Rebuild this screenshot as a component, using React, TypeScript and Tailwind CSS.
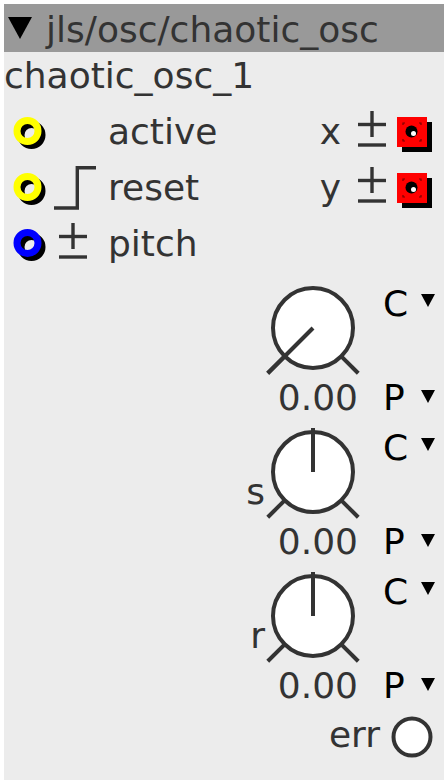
import type { ReactNode } from "react";

const font = { fontFamily: '"DejaVu Sans", "Liberation Sans", sans-serif' };

function Inlet({ color }: { color: string }) {
  return (
    <svg width="50" height="56" className="shrink-0">
      <circle cx="27.5" cy="32" r="10.5" fill="none" stroke="#000" strokeWidth="7" />
      <circle cx="23.5" cy="28" r="10.5" fill="none" stroke={color} strokeWidth="7" />
    </svg>
  );
}

function Outlet() {
  return (
    <svg width="38" height="56" className="ml-[8px] shrink-0">
      <rect x="7" y="19" width="30" height="30" fill="#000" />
      <rect x="2" y="14" width="30" height="30" fill="#ff0000" />
      <path
        d="M8 22v-2h2M24 20h2v2M26 36v2h-2M10 38H8v-2"
        stroke="#7a0000"
        strokeWidth="1.2"
        fill="none"
      />
      <circle cx="16.5" cy="28.5" r="6" fill="#000" />
      <circle cx="18.5" cy="30.5" r="2.5" fill="#fff" />
    </svg>
  );
}

function PlusMinus({ className }: { className?: string }) {
  return (
    <svg width="30" height="56" className={className}>
      <g stroke="#333" strokeWidth="3.4">
        <line x1="15" y1="8" x2="15" y2="34" />
        <line x1="1" y1="21.5" x2="29" y2="21.5" />
        <line x1="1" y1="42" x2="29" y2="42" />
      </g>
    </svg>
  );
}

function Step() {
  return (
    <svg width="54" height="56" className="shrink-0">
      <path d="M0 49H23.3V8.7H42" fill="none" stroke="#333" strokeWidth="3.4" />
    </svg>
  );
}

function Row({
  color,
  icon,
  label,
  right,
}: {
  color: string;
  icon?: ReactNode;
  label: string;
  right?: ReactNode;
}) {
  return (
    <div className="flex h-[56px] items-start">
      <Inlet color={color} />
      <div className="flex h-[56px] w-[54px] shrink-0">{icon}</div>
      <span className="pt-[1px] leading-[56px]">{label}</span>
      {right && <div className="ml-auto flex items-start pr-[11px]">{right}</div>}
    </div>
  );
}

function OutRight({ label }: { label: string }) {
  return (
    <>
      <span className="pt-[1px] leading-[56px]">{label}</span>
      <PlusMinus className="ml-[16px] shrink-0" />
      <Outlet />
    </>
  );
}

function Tri({ className }: { className?: string }) {
  return (
    <svg width="14" height="13" className={className}>
      <polygon points="0,0 14,0 7,13" fill="#000" />
    </svg>
  );
}

function Knob({ centered }: { centered: boolean }) {
  return (
    <svg width="100" height="96" className="shrink-0">
      <g stroke="#333" strokeWidth="4" fill="none">
        <circle cx="50" cy="48" r="40" fill="#fff" />
        <line x1="21.7" y1="76.3" x2="4.75" y2="93.25" />
        <line x1="78.3" y1="76.3" x2="95.25" y2="93.25" />
        {centered ? (
          <line x1="50" y1="48" x2="50" y2="4" />
        ) : (
          <line x1="50" y1="48" x2="4.75" y2="93.25" />
        )}
      </g>
    </svg>
  );
}

function KnobBlock({ label }: { label?: string }) {
  return (
    <div className="flex h-[144px] justify-end">
      <div className="flex flex-col items-end">
        <div className="flex items-start">
          {label && <span className="mt-[48px] -mr-[2px] leading-[40px]">{label}</span>}
          <Knob centered={!!label} />
        </div>
        <div className="h-[40px] pr-[5px] pt-[2px] leading-[40px]">0.00</div>
      </div>
      <div className="ml-[20px] flex h-[138px] w-[61px] flex-col justify-between pt-[4px] text-black">
        <div className="flex h-[40px] items-start">
          <span className="w-[38px] leading-[40px]">C</span>
          <Tri className="mt-[10px]" />
        </div>
        <div className="flex h-[40px] items-start">
          <span className="w-[38px] leading-[40px]">P</span>
          <Tri className="mt-[12px]" />
        </div>
      </div>
    </div>
  );
}

export default function App() {
  return (
    <div className="h-[784px] w-[448px] bg-white p-[4px]" style={font}>
      <div className="flex h-[776px] w-[440px] flex-col bg-[#ececec] text-[36px] text-[#333]">
        <div className="flex h-[48px] shrink-0 items-start overflow-hidden bg-[#999999]">
          <svg width="24" height="22" className="ml-[4px] mt-[13px] shrink-0">
            <polygon points="0,0 24,0 12,22" fill="#000" />
          </svg>
          <span className="ml-[14px] pt-[4px] leading-[44px] whitespace-nowrap">jls/osc/chaotic_osc</span>
        </div>
        <div className="h-[51px] shrink-0 leading-[47px]">chaotic_osc_1</div>
        <Row color="#ffff00" label="active" right={<OutRight label="x" />} />
        <Row color="#ffff00" icon={<Step />} label="reset" right={<OutRight label="y" />} />
        <Row color="#0000ff" icon={<PlusMinus className="ml-[4px]" />} label="pitch" />
        <div className="mt-[9px]">
          <KnobBlock />
          <KnobBlock label="s" />
          <KnobBlock label="r" />
        </div>
        <div className="flex h-[48px] items-start justify-end pr-[10px]">
          <span className="leading-[46px]">err</span>
          <svg width="44" height="44" className="ml-[10px] mt-[3px] shrink-0">
            <circle cx="22" cy="22" r="18.5" fill="#fff" stroke="#333" strokeWidth="4" />
          </svg>
        </div>
      </div>
    </div>
  );
}
